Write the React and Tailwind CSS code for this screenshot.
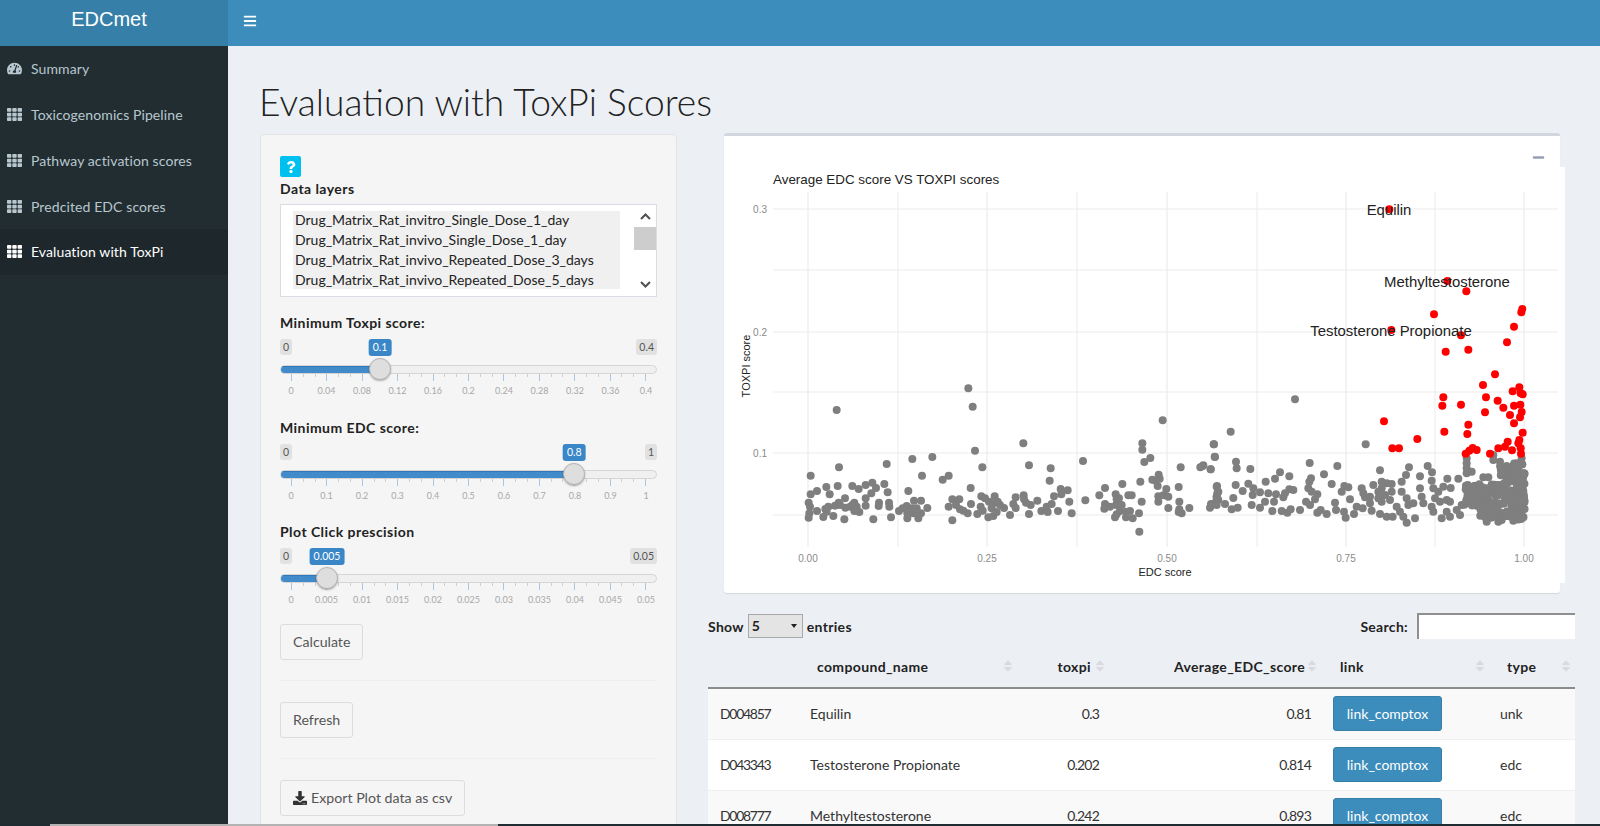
import React from 'react';
import { FaBars, FaTachometerAlt, FaTh, FaQuestion, FaDownload, FaMinus, FaSort } from 'react-icons/fa';

const menu = [
  { label: 'Summary', icon: FaTachometerAlt },
  { label: 'Toxicogenomics Pipeline', icon: FaTh },
  { label: 'Pathway activation scores', icon: FaTh },
  { label: 'Predcited EDC scores', icon: FaTh },
  { label: 'Evaluation with ToxPi', icon: FaTh, active: true },
];

const layers = [
  'Drug_Matrix_Rat_invitro_Single_Dose_1_day',
  'Drug_Matrix_Rat_invivo_Single_Dose_1_day',
  'Drug_Matrix_Rat_invivo_Repeated_Dose_3_days',
  'Drug_Matrix_Rat_invivo_Repeated_Dose_5_days',
];

const rows = [
  { id: 'D004857', name: 'Equilin', toxpi: '0.3', edc: '0.81', type: 'unk' },
  { id: 'D043343', name: 'Testosterone Propionate', toxpi: '0.202', edc: '0.814', type: 'edc' },
  { id: 'D008777', name: 'Methyltestosterone', toxpi: '0.242', edc: '0.893', type: 'edc' },
];

// point lists are read off the plot, first group x = 720 + zx / 3, y = 380 + zy / 3
const grayLeft = [
  [350,90],[745,25],[758,80],[1328,121],[765,212],[910,190],[1267,190],[1267,209],[1482,193],[1485,231],[1273,246],[1291,234],[1089,243],[927,256],[992,265],[787,262],[500,252],[577,237],[637,231],[357,262],[272,287],[606,287],[686,287],[668,299],[989,302],[1382,262],[1441,262],[1450,256],[1472,268],
  [319,321],[353,318],[397,318],[416,327],[437,315],[457,308],[468,324],[493,312],[503,337],[291,333],[272,343],[329,343],[454,340],[565,333],[752,324],[1155,324],[1207,312],[1261,305],[1297,299],[1307,302],[1316,284],[1319,296],[1313,318],[1376,321],[1339,327],[1491,318],[1022,327],[1043,331],[1024,343],[1002,349],[1138,346],[1187,343],[1225,346],[1235,346],[1492,340],[1490,350],
  [375,355],[437,355],[582,362],[603,362],[697,358],[718,358],[784,349],[795,355],[824,349],[887,352],[911,346],[912,358],[952,362],[1096,361],[1190,358],[1197,355],[1315,349],[1315,365],[1330,346],[1345,350],[1265,365],[1378,365],[1473,372],[1488,365],
  [266,368],[270,380],[356,368],[345,377],[403,368],[397,375],[410,380],[437,377],[477,368],[507,368],[508,380],[476,378],[325,380],[316,387],[360,375],[376,383],[390,380],[560,378],[548,385],[575,385],[590,385],[622,384],[686,380],[708,375],[720,388],[753,372],[782,380],[807,365],[820,370],[833,365],[840,375],[852,384],[880,372],[887,384],[918,368],[932,375],[995,372],[980,380],[964,393],[1048,365],[1155,372],[1153,386],[1170,380],[1188,375],[1205,375],[1200,393],[1345,384],[1378,388],[1408,384],[1470,383],
  [291,393],[268,400],[266,413],[310,411],[320,395],[340,408],[373,418],[403,393],[418,396],[460,418],[513,412],[537,393],[562,400],[562,415],[580,400],[595,415],[603,400],[590,400],[697,421],[730,392],[743,400],[772,402],[788,392],[805,412],[820,408],[830,396],[815,385],[870,405],[927,402],[983,396],[1014,393],[1055,400],[1185,412],[1190,403],[1218,395],[1218,412],[1230,393],[1238,415],[1257,400],[1258,455],[1376,396],[1385,400],
];

// second group x = 1200 + zx / 3, y = 360 + zy / 3
const grayRight = [
  [285,118],[92,215],[41,253],[44,290],[8,318],[32,328],[108,305],[110,325],[151,327],[240,337],[225,356],[197,365],[268,349],[329,309],[333,355],[328,365],[372,343],[412,318],[497,253],[540,331],[627,322],[618,345],[605,365],[660,349],[683,318],[696,337],[695,362],[742,356],[775,356],[752,384],
  [50,380],[55,395],[50,410],[55,420],[35,435],[50,435],[75,432],[95,448],[113,443],[100,414],[107,375],[128,393],[145,371],[160,385],[158,405],[155,435],[180,397],[205,400],[195,425],[180,443],[217,453],[228,403],[222,425],[268,388],[255,400],[280,390],[250,412],[245,453],[262,458],[272,448],[300,450],[318,425],[330,435],[325,385],[335,395],[352,403],[345,418],[352,458],[362,450],[380,462],[395,372],[405,428],[408,450],[433,378],[445,382],[425,395],[450,418],[432,455],[437,473],[462,462],[470,440],[488,445],[485,385],[490,400],[495,412],[520,375],[510,410],[510,430],[515,452],[540,462],[545,365],[560,370],[575,372],[545,385],[535,395],[555,405],[575,395],[535,415],[545,425],[570,420],[590,440],[600,455],[605,395],[620,415],[625,435],[640,430],[660,385],[665,410],[670,430],[610,470],[620,488],[645,475],[560,470],[578,470],[695,440],[700,455],[725,475],[700,385],[715,395],[705,415],[720,425],[730,380],[740,420],[750,425],[740,455],[750,470],[770,450],[785,435],[780,465],[800,420],
  [860,485],[895,485],[905,480],[940,482],[965,465],[880,300],[900,305],[815,335],[850,352],[865,352],[800,295],[800,310],[800,325],[800,340],[880,285],[950,310],[965,295],
];

// the dense block next to EDC score 1.00
const blob = (() => {
  const out = [];
  let seed = 7;
  const next = () => {
    seed = (seed * 1103 + 12345) % 65536;
    return seed / 65536;
  };
  [[790, 372, 975, 440, 110], [840, 440, 975, 480, 45], [900, 310, 975, 372, 45], [935, 340, 975, 440, 40]].forEach(([x0, y0, x1, y1, n]) => {
    for (let i = 0; i < n; i++) out.push([x0 + next() * (x1 - x0), y0 + next() * (y1 - y0)]);
  });
  return out;
})();

const redRight = [
  [885,43],[849,75],[958,82],[938,94],[962,100],[968,103],[730,112],[858,112],[893,122],[727,137],[783,134],[942,137],[961,134],[910,143],[855,157],[965,156],[930,165],[960,172],[942,190],[805,194],[733,215],[802,222],[968,218],[652,237],[958,240],[923,245],[552,184],[577,265],[597,265],[818,264],[830,270],[808,272],[797,281],[870,281],[895,265],[915,260],[936,271],[955,250],[962,265],[963,281],
];

// third group x = 1200 + zx / 3, y = 130 + zy / 3
const redTop = [
  [568,238],[742,453],[799,484],[702,553],[967,537],[964,547],[942,590],[574,600],[783,616],[921,637],[737,665],[805,659],
];

const grayPoints = [
  ...grayLeft.map(([x, y]) => [720 + x / 3, 380 + y / 3]),
  ...[...grayRight, ...blob].map(([x, y]) => [1200 + x / 3, 360 + y / 3]),
];
const redPoints = [
  ...redRight.map(([x, y]) => [1200 + x / 3, 360 + y / 3]),
  ...redTop.map(([x, y]) => [1200 + x / 3, 130 + y / 3]),
];

const ScatterPlot = () => (
  <svg viewBox="724 167 841 416" className="block w-[841px] h-[416px] -mr-[5px] bg-white font-['Liberation_Sans',sans-serif]">
    {[808, 898, 987, 1077, 1167, 1257, 1346, 1435, 1524].map((x) => (
      <line key={x} x1={x} x2={x} y1={192} y2={547} stroke="#ebebeb" strokeWidth={x === 808 || x === 987 || x === 1167 || x === 1346 || x === 1524 ? 1.2 : 1} />
    ))}
    {[209, 270, 332, 392, 453, 515].map((y) => (
      <line key={y} x1={773} x2={1558} y1={y} y2={y} stroke="#ebebeb" />
    ))}
    {grayPoints.map(([x, y], i) => <circle key={i} cx={x} cy={y} r={4} fill="#7f7f7f" />)}
    {redPoints.map(([x, y], i) => <circle key={i} cx={x} cy={y} r={4} fill="#ff0000" />)}
    <text x={773} y={184} fontSize={13.4} fill="#222">Average EDC score VS TOXPI scores</text>
    <g fontSize={10} fill="#8a8a8a">
      <text x={767} y={213} textAnchor="end">0.3</text>
      <text x={767} y={336} textAnchor="end">0.2</text>
      <text x={767} y={457} textAnchor="end">0.1</text>
      <text x={808} y={562} textAnchor="middle">0.00</text>
      <text x={987} y={562} textAnchor="middle">0.25</text>
      <text x={1167} y={562} textAnchor="middle">0.50</text>
      <text x={1346} y={562} textAnchor="middle">0.75</text>
      <text x={1524} y={562} textAnchor="middle">1.00</text>
    </g>
    <text x={1165} y={576} fontSize={11} fill="#222" textAnchor="middle">EDC score</text>
    <text transform="translate(750 366) rotate(-90)" fontSize={11} fill="#222" textAnchor="middle">TOXPI score</text>
    <g fontSize={14.9} fill="#222" textAnchor="middle">
      <text x={1389} y={215}>Equilin</text>
      <text x={1447} y={287}>Methyltestosterone</text>
      <text x={1391} y={336}>Testosterone Propionate</text>
    </g>
  </svg>
);

const Slider = ({ label, min, max, value, ticks, className }) => {
  const pct = ((value - min) / (max - min)) * 100;
  // handle and value tag follow the value along the 353px wide scale
  const pos = 11.7 + (pct / 100) * 353.3;
  return (
    <div className={className}>
      <div className="text-[14px] leading-[20px] font-bold tracking-[0.45px] text-[#222]">{label}</div>
      <div className="relative h-[64px] mt-[6px]">
        <div className="flex justify-between">
          <span className="h-[16px] px-[3px] rounded-[3px] bg-[#e1e1e1] text-[10.5px] leading-[16px] text-[#555]">{min}</span>
          <span className="h-[16px] px-[3px] rounded-[3px] bg-[#e1e1e1] text-[10.5px] leading-[16px] text-[#555]">{max}</span>
        </div>
        <span
          className="absolute top-0 h-[17px] -translate-x-1/2 px-[4px] rounded-[3px] bg-[#3a87c8] text-[10.5px] leading-[17px] text-white"
          style={{ left: pos }}
        >
          {value}
        </span>
        <div className="relative mt-[10px] h-[9px] rounded-full bg-[#f0f0f0] border border-[#d5d5d5] overflow-hidden">
          <div className="h-full bg-[#428bca] border-t border-[#2f79bb]" style={{ width: pos }} />
        </div>
        <span
          className="absolute top-[19px] w-[22px] h-[22px] -translate-x-1/2 rounded-full bg-[#dedede] border border-[#b5b5b5] shadow-[0_1px_2px_rgba(0,0,0,0.3)]"
          style={{ left: pos }}
        />
        <div className="flex justify-between items-start ml-[11px] mr-[11px] -mt-[1px]">
          {Array.from({ length: 31 }, (_, i) => (
            <span key={i} className={i % 3 === 0 ? 'w-px h-[8px] bg-[#a9c7e2]' : 'w-px h-[4px] bg-[#cfcfcf]'} />
          ))}
        </div>
        <div className="flex justify-between ml-[11px] mr-[11px] mt-[4px]">
          {ticks.map((t) => (
            <span key={t} className="w-0 flex justify-center text-[9px] leading-[12px] text-[#a8a8a8]">{t}</span>
          ))}
        </div>
      </div>
    </div>
  );
};

const PlainButton = ({ children, className }) => (
  <button className={`flex items-center h-[36px] px-[12px] border border-[#dcdcdc] rounded-[3px] bg-[#f5f5f5] text-[14.2px] text-[#555] ${className || ''}`}>
    {children}
  </button>
);

const SortHead = ({ children, className }) => (
  <th className={`pb-[10px] pt-[8px] font-bold text-[14px] tracking-[0.35px] text-[#222] relative ${className || ''}`}>
    {children}
  </th>
);

const SortMark = ({ className }) => <FaSort className={`absolute top-[11px] text-[14px] text-[#d9dbe0] ${className}`} />;

export default function App() {
  return (
    <div className="relative flex h-[826px] w-[1600px] overflow-hidden bg-[#ecf0f5] font-['Lato','Noto_Sans',sans-serif]">
      {/* Sidebar */}
      <aside className="w-[228px] shrink-0 bg-[#222d32]">
        <div className="h-[46px] bg-[#367fa9] text-white text-[20px] leading-[38px] text-center font-['Liberation_Sans',sans-serif] pr-[10px]">
          EDCmet
        </div>
        <nav>
          {menu.map(({ label, icon: Icon, active }) => (
            <div
              key={label}
              className={`flex items-center h-[45.75px] pl-[7px] gap-[9px] text-[14px] tracking-[0.1px] ${active ? 'bg-[#1e282c] text-white' : 'text-[#b8c7ce]'}`}
            >
              <Icon className="w-[15px] h-[15px]" />
              {label}
            </div>
          ))}
        </nav>
      </aside>

      {/* Main */}
      <div className="flex-1 min-w-0">
        <header className="h-[46px] flex items-center bg-[#3c8dbc] pl-[15px] pb-[5px] text-white">
          <FaBars className="w-[14px] h-[14px]" />
        </header>

        <div className="pl-[32px]">
          <h1 className="h-[88px] pt-[31px] -ml-[1px] text-[37.2px] leading-[50px] font-light text-[#222]">Evaluation with ToxPi Scores</h1>

          <div className="flex">
            {/* Controls */}
            <div className="w-[417px] h-[720px] shrink-0 px-[19px] pt-[21px] rounded-[4px] bg-[#f5f5f5] border border-[#e3e3e3]">
              <div className="flex items-center justify-center w-[21px] h-[21px] rounded-[2px] bg-[#00c0ef] text-white">
                <FaQuestion className="w-[12px] h-[12px]" />
              </div>
              <div className="mt-[2px] text-[14px] leading-[20px] font-bold tracking-[0.45px] text-[#222]">Data layers</div>
              <div className="flex mt-[5px] h-[93px] w-[377px] bg-white border border-[#d9dde3] pl-[12px]">
                <div className="w-[327px] mt-[6px] h-[78px] bg-[#f0f0f0] pl-[2px] text-[14px] leading-[20px] text-[#222]">
                  {layers.map((l) => <div key={l} className="h-[20px] first:-mt-px">{l}</div>)}
                </div>
                <div className="ml-auto w-[22px] flex flex-col bg-white">
                  <span className="h-[22px] flex items-center justify-center text-[#555] text-[11px]">
                    <svg width="11" height="7" viewBox="0 0 11 7"><path d="M1 6l4.5-4.5L10 6" fill="none" stroke="#505050" strokeWidth="2" /></svg>
                  </span>
                  <span className="h-[23px] bg-[#cdcdcd]" />
                  <span className="flex-1 flex items-end justify-center pb-[8px]">
                    <svg width="11" height="7" viewBox="0 0 11 7"><path d="M1 1l4.5 4.5L10 1" fill="none" stroke="#505050" strokeWidth="2" /></svg>
                  </span>
                </div>
              </div>

              <Slider
                className="mt-[16px]"
                label="Minimum Toxpi score:"
                min={0}
                max={0.4}
                value={0.1}
                ticks={[0, 0.04, 0.08, 0.12, 0.16, 0.2, 0.24, 0.28, 0.32, 0.36, 0.4]}
              />
              <Slider
                className="mt-[15px]"
                label="Minimum EDC score:"
                min={0}
                max={1}
                value={0.8}
                ticks={[0, 0.1, 0.2, 0.3, 0.4, 0.5, 0.6, 0.7, 0.8, 0.9, 1]}
              />
              <Slider
                className="mt-[14px]"
                label="Plot Click prescision"
                min={0}
                max={0.05}
                value={0.005}
                ticks={[0, 0.005, 0.01, 0.015, 0.02, 0.025, 0.03, 0.035, 0.04, 0.045, 0.05]}
              />

              <PlainButton className="mt-[12px]">Calculate</PlainButton>
              <hr className="mt-[20px] border-[#eeeeee]" />
              <PlainButton className="mt-[21px]">Refresh</PlainButton>
              <hr className="mt-[20px] border-[#eeeeee]" />
              <PlainButton className="mt-[21px]">
                <FaDownload className="w-[14px] h-[14px] mr-[4px] text-[#333]" />
                Export Plot data as csv
              </PlainButton>
            </div>

            {/* Plot and table */}
            <div className="w-[867px] ml-[31px] shrink-0">
              <div className="relative w-[836px] h-[460px] ml-[16px] -mt-[1px] bg-white border-t-[3px] border-[#d2d6de] rounded-[3px] shadow-[0_1px_1px_rgba(0,0,0,0.1)] pt-[31px]">
                <FaMinus className="absolute right-[15px] top-[15px] w-[13px] h-[13px] text-[#97a0b3]" />
                <ScatterPlot />
              </div>

              <div className="flex items-center justify-between mt-[20px] text-[14px] font-bold tracking-[0.3px] text-[#222]">
                <div className="flex items-center">
                  Show
                  <div className="relative w-[55px] h-[24px] mx-[4px] bg-[#e4e4e4] border border-[#a9a9a9] pl-[3px] leading-[22px] font-bold">
                    5
                    <span className="absolute right-[5px] top-[9px] border-x-[3px] border-t-[4px] border-x-transparent border-t-[#222]" />
                  </div>
                  entries
                </div>
                <div className="flex items-center">
                  Search:
                  <div className="ml-[9px] w-[158px] h-[26px] bg-white border-l-2 border-t-2 border-[#8f8f8f]" />
                </div>
              </div>

              <table className="w-[867px] mt-[9px] table-fixed text-[14px] text-[#333]">
                <thead>
                  <tr className="h-[40px] border-b-2 border-[#8c8c8c]">
                    <SortHead className="w-[90px]" />
                    <SortHead className="w-[213px] text-left">
                      <span className="pl-[19px]">compound_name</span>
                      <SortMark className="-right-[4px]" />
                    </SortHead>
                    <SortHead className="w-[99px] text-right">
                      <span className="pr-[19px]">toxpi</span>
                      <SortMark className="right-[3px]" />
                    </SortHead>
                    <SortHead className="w-[212px] text-right">
                      <span className="pr-[17px]">Average_EDC_score</span>
                      <SortMark className="right-[3px]" />
                    </SortHead>
                    <SortHead className="w-[167px] text-left">
                      <span className="pl-[18px]">link</span>
                      <SortMark className="right-[2px]" />
                    </SortHead>
                    <SortHead className="w-[86px] text-left">
                      <span className="pl-[18px]">type</span>
                      <SortMark className="right-[2px]" />
                    </SortHead>
                  </tr>
                </thead>
                <tbody>
                  {rows.map((r, i) => (
                    <tr key={r.id} className={`h-[51px] border-b border-[#f0f0f0] ${i % 2 === 0 ? 'bg-[#f9f9f9]' : 'bg-white'}`}>
                      <td className="pl-[12px] tracking-[-1.3px]">{r.id}</td>
                      <td className="pl-[12px]">{r.name}</td>
                      <td className="text-right pr-[11px] tracking-[-0.8px]">{r.toxpi}</td>
                      <td className="text-right pr-[11px] tracking-[-0.8px]">{r.edc}</td>
                      <td className="pl-[11px]">
                        <button className="w-[109px] h-[35px] bg-[#3c8dbc] border border-[#367fa9] rounded-[3px] text-white">link_comptox</button>
                      </td>
                      <td className="pl-[11px]">{r.type}</td>
                    </tr>
                  ))}
                </tbody>
              </table>
            </div>
          </div>
        </div>
      </div>

      {/* Thin strip that cuts across the bottom edge of the capture */}
      <div className="absolute bottom-0 left-0 right-0 h-[2px] flex">
        <span className="w-[50px] bg-[#1f2d33]" />
        <span className="w-[448px] bg-[#b3b3b3]" />
        <span className="flex-1 bg-[#1f2d33]" />
      </div>
    </div>
  );
}
